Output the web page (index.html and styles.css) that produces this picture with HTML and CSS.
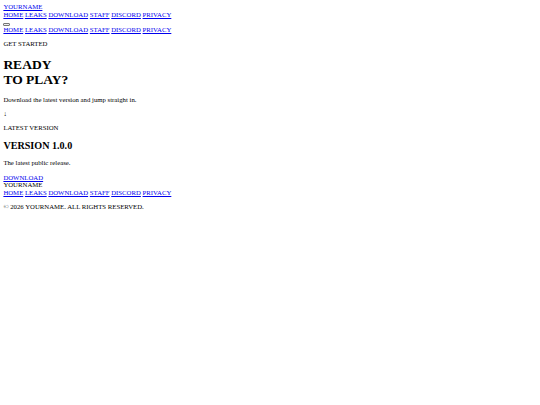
FILE: index.html
```html
<!DOCTYPE html>
<html lang="en">
<head>
<meta charset="utf-8">
<title>YOURNAME</title>
<link rel="stylesheet" href="styles.css">
</head>
<body>
<header class="site-header">
  <div class="brand"><a href="#">YOURNAME</a></div>
  <nav class="nav-main">
    <a href="#">HOME</a>
    <a href="#">LEAKS</a>
    <a href="#">DOWNLOAD</a>
    <a href="#">STAFF</a>
    <a href="#">DISCORD</a>
    <a href="#">PRIVACY</a>
  </nav>
  <button class="menu-toggle" type="button" aria-label="Menu"></button>
  <nav class="nav-mobile">
    <a href="#">HOME</a>
    <a href="#">LEAKS</a>
    <a href="#">DOWNLOAD</a>
    <a href="#">STAFF</a>
    <a href="#">DISCORD</a>
    <a href="#">PRIVACY</a>
  </nav>
</header>
<main>
  <section class="hero">
    <p>GET STARTED</p>
    <h1>READY<br>TO PLAY?</h1>
    <p>Download the latest version and jump straight in.</p>
    <p class="arrow">↓</p>
  </section>
  <section class="release">
    <p>LATEST VERSION</p>
    <h2>VERSION 1.0.0</h2>
    <p>The latest public release.</p>
    <div class="cta"><a href="#">DOWNLOAD</a></div>
  </section>
</main>
<footer class="site-footer">
  <div class="footer-brand">YOURNAME</div>
  <nav class="nav-footer">
    <a href="#">HOME</a>
    <a href="#">LEAKS</a>
    <a href="#">DOWNLOAD</a>
    <a href="#">STAFF</a>
    <a href="#">DISCORD</a>
    <a href="#">PRIVACY</a>
  </nav>
  <p>© 2026 YOURNAME. ALL RIGHTS RESERVED.</p>
</footer>
</body>
</html>
```
FILE: styles.css
```css
body {
  margin: 3.375px;
  font-family: "Liberation Serif", "Times New Roman", serif;
  font-size: 6.75px;
  line-height: 7.6px;
  color: #000;
}
a {
  color: #0000ee;
}
p {
  margin: 6.6px 0;
}
h1 {
  font-size: 13.5px;
  line-height: 15.1px;
  margin: 8.8px 0;
}
h2 {
  font-size: 10.125px;
  line-height: 11.4px;
  margin: 8.2px 0;
}
.menu-toggle {
  display: inline-block;
  box-sizing: border-box;
  width: 6.75px;
  height: 2.6px;
  padding: 0;
  border: 0.8px solid #767676;
  border-radius: 1px;
  background: #efefef;
  vertical-align: baseline;
}
```
